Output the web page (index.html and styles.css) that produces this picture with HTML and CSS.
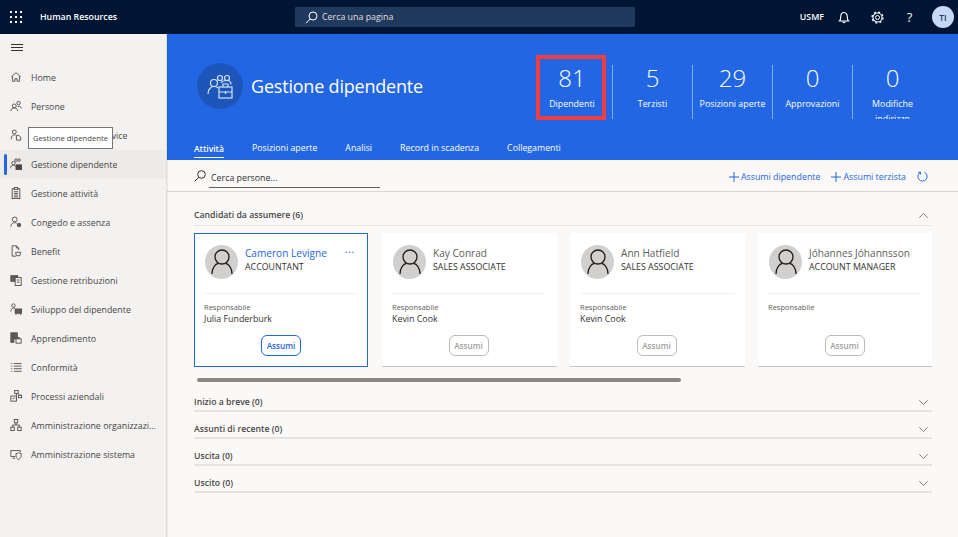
FILE: index.html
```html
<!DOCTYPE html>
<html lang="it">
<head>
<meta charset="utf-8">
<title>Gestione dipendente</title>
<link rel="stylesheet" href="styles.css">
</head>
<body>
<header class="topbar">
  <svg class="waffle" width="12" height="12" viewBox="0 0 12 12" fill="#fff"><rect x="0" y="0" width="2" height="2"/><rect x="5" y="0" width="2" height="2"/><rect x="10" y="0" width="2" height="2"/><rect x="0" y="5" width="2" height="2"/><rect x="5" y="5" width="2" height="2"/><rect x="10" y="5" width="2" height="2"/><rect x="0" y="10" width="2" height="2"/><rect x="5" y="10" width="2" height="2"/><rect x="10" y="10" width="2" height="2"/></svg>
  <span class="brand">Human Resources</span>
  <div class="globalsearch">
    <svg width="13" height="13" viewBox="0 0 13 13" fill="none" stroke="#fff" stroke-width="1"><circle cx="8" cy="5" r="4"/><path d="M5.200 8L1 12.200"/></svg>
    <span>Cerca una pagina</span>
  </div>
  <div class="topright">
    <span class="company">USMF</span>
    <svg class="ticon" width="12" height="13" viewBox="0 0 12 13" fill="none" stroke="#fff" stroke-width="1.100"><path d="M1.500 10h9c-1-1-1.200-2-1.200-4C9.300 3.500 8 1.500 6 1.500S2.700 3.500 2.700 6c0 2-.2 3-1.200 4z"/><path d="M4.700 10.500c0 1.600 2.600 1.600 2.600 0"/></svg>
    <svg class="ticon" width="13" height="13" viewBox="0 0 13 13" fill="none" stroke="#fff"><circle cx="6.500" cy="6.500" r="2"/><circle cx="6.500" cy="6.500" r="4.500" stroke-width="1.100"/><circle cx="6.500" cy="6.500" r="5.500" stroke-width="1.300" stroke-dasharray="2 2.320"/></svg>
    <span class="help">?</span>
    <span class="avatar">TI</span>
  </div>
</header>
<div class="main">
  <nav class="sidebar">
    <svg class="burger" width="12" height="8" viewBox="0 0 12 8" stroke="#323130" stroke-width="1"><path d="M0 .5h12M0 3.500h12M0 6.500h12"/></svg>
    <ul class="navlist">
      <li class="navitem"><svg class="navicon" viewBox="0 0 14 14" fill="none" stroke="#484644"><path d="M1.500 7L7 2l5.500 5M3 6v6h2.800V9h2.400v3H11V6"/></svg><span class="navlabel">Home</span></li>
      <li class="navitem"><svg class="navicon" viewBox="0 0 14 14" fill="none" stroke="#484644"><circle cx="5" cy="7" r="2.300"/><path d="M1 13c0-5 8-5 8 0"/><circle cx="10" cy="3.500" r="2"/><path d="M9 8c2-1.500 4-.5 4 2"/></svg><span class="navlabel">Persone</span></li>
      <li class="navitem"><svg class="navicon" viewBox="0 0 14 14" fill="none" stroke="#484644"><circle cx="5" cy="3.500" r="2.300"/><path d="M1.500 12c0-4 2-5.500 5-5"/><path d="M7.500 7.500h3l2 2v3.500h-5z"/></svg><span class="navlabel">Dipendente self-service</span></li>
      <li class="navitem active"><svg class="navicon" viewBox="0 0 14 14" fill="none" stroke="#484644"><circle cx="4" cy="6" r="2"/><path d="M.5 12c0-4 5-4 6-2"/><circle cx="7" cy="2.500" r="1.500"/><circle cx="10.500" cy="2.500" r="1.500"/><rect x="7" y="8" width="6.500" height="5.500" fill="#484644"/></svg><span class="navlabel">Gestione dipendente</span></li>
      <li class="navitem"><svg class="navicon" viewBox="0 0 14 14" fill="none" stroke="#484644"><rect x="2.500" y="2" width="9" height="11.500"/><rect x="5" y=".5" width="4" height="2.500" fill="#f3f2f1"/><path d="M4.500 5.500h5M4.500 7.500h5M4.500 9.500h5M4.500 11.500h5"/></svg><span class="navlabel">Gestione attività</span></li>
      <li class="navitem"><svg class="navicon" viewBox="0 0 14 14" fill="none" stroke="#484644"><circle cx="5.500" cy="4" r="2.800"/><path d="M1 12.500c0-5 5-5.500 7-4"/><circle cx="10.500" cy="10.500" r="2" fill="#605e5c"/></svg><span class="navlabel">Congedo e assenza</span></li>
      <li class="navitem"><svg class="navicon" viewBox="0 0 14 14" fill="none" stroke="#484644"><path d="M2.500 13V1h5l2.500 2.500V6"/><path d="M7.500 1v2.500H10"/><path d="M2.500 13H7"/><path d="M6.500 8.500h6l-1 4h-4z"/></svg><span class="navlabel">Benefit</span></li>
      <li class="navitem"><svg class="navicon" viewBox="0 0 14 14" fill="none" stroke="#484644"><rect x="1" y="2" width="8" height="6.500" fill="#605e5c"/><rect x="6" y="4" width="7" height="9.500" fill="#f3f2f1"/><path d="M8 7h3M8 9.500h3"/></svg><span class="navlabel">Gestione retribuzioni</span></li>
      <li class="navitem"><svg class="navicon" viewBox="0 0 14 14" fill="none" stroke="#484644"><circle cx="4" cy="3" r="2"/><path d="M1 10c0-4 3-4.500 5-3.500"/><rect x="6" y="7" width="7.500" height="5" fill="#605e5c"/><path d="M7 13v1M12.500 13v1"/></svg><span class="navlabel">Sviluppo del dipendente</span></li>
      <li class="navitem"><svg class="navicon" viewBox="0 0 14 14" fill="none" stroke="#484644"><rect x="1" y="1" width="3.500" height="11" fill="#605e5c"/><rect x="5" y="1" width="3.500" height="7" fill="#605e5c"/><rect x="7" y="8" width="6" height="5" fill="#f3f2f1"/><path d="M9 8V6.500h2V8"/></svg><span class="navlabel">Apprendimento</span></li>
      <li class="navitem"><svg class="navicon" viewBox="0 0 14 14" fill="none" stroke="#484644"><path d="M4.500 3h9M4.500 6h9M4.500 9h9M4.500 12h9"/><path d="M1 3h2M1 6h2M1 9h2M1 12h2" stroke-dasharray="1 .6"/></svg><span class="navlabel">Conformità</span></li>
      <li class="navitem"><svg class="navicon" viewBox="0 0 14 14" fill="none" stroke="#484644"><rect x="5.500" y=".5" width="4" height="3.500"/><rect x="1" y="7" width="6.500" height="6"/><rect x="10" y="6" width="3.500" height="3"/><path d="M7.500 4v3M9.500 4l2 2M3 9.500l1 1 2-2"/></svg><span class="navlabel">Processi aziendali</span></li>
      <li class="navitem"><svg class="navicon" viewBox="0 0 14 14" fill="none" stroke="#484644"><rect x="5" y=".5" width="4" height="4"/><rect x="1" y="9.500" width="4" height="4"/><rect x="9" y="9.500" width="4" height="4"/><path d="M7 4.500V7M3 9.500V7h8v2.500"/></svg><span class="navlabel">Amministrazione organizzazione</span></li>
      <li class="navitem"><svg class="navicon" viewBox="0 0 14 14" fill="none" stroke="#484644"><path d="M6 10H1V3h11v2"/><path d="M3 12h3"/><path d="M7 6.500c2 0 2.500-1 3-1s1 1 3 1v3c0 2-2 3.500-3 4-1-.5-3-2-3-4z"/></svg><span class="navlabel">Amministrazione sistema</span></li>
    </ul>
    <div class="tooltip">Gestione dipendente</div>
  </nav>
  <main class="content">
    <section class="hero">
      <div class="herotop">
        <div class="heroid">
          <div class="herobadge">
            <svg width="26" height="26" viewBox="0 0 26 26" fill="none" stroke="#d5e4fa" stroke-width="1.200"><circle cx="7" cy="10" r="3.500"/><path d="M1 21c0-6 4-7.500 6-7.500 1.500 0 3 .5 4 1.500"/><circle cx="13" cy="5" r="2.500"/><circle cx="20" cy="5" r="2.500"/><path d="M14 10c1-2 4-2.500 6-2.500s4 1 4 4"/><rect x="12" y="14" width="13" height="11" fill="#1e55b8"/><path d="M16 14v-3h5v3M12 19h13M18.500 18v3"/></svg>
          </div>
          <h1 class="herotitle">Gestione dipendente</h1>
        </div>
        <div class="kpis">
          <div class="kpi"><span class="kpinum">81</span><span class="kpilabel">Dipendenti</span></div>
          <div class="kpi"><span class="kpinum">5</span><span class="kpilabel">Terzisti</span></div>
          <div class="kpi"><span class="kpinum">29</span><span class="kpilabel">Posizioni aperte</span></div>
          <div class="kpi"><span class="kpinum">0</span><span class="kpilabel">Approvazioni</span></div>
          <div class="kpi"><span class="kpinum">0</span><span class="kpilabel">Modifiche indirizzo</span></div>
          <div class="redbox"></div>
        </div>
      </div>
      <div class="tabs">
        <span class="tab selected">Attività</span>
        <span class="tab">Posizioni aperte</span>
        <span class="tab">Analisi</span>
        <span class="tab">Record in scadenza</span>
        <span class="tab">Collegamenti</span>
      </div>
    </section>
    <div class="toolbar">
      <div class="peoplesearch">
        <svg width="12" height="12" viewBox="0 0 12 12" fill="none" stroke="#323130"><circle cx="7.500" cy="4.500" r="3.800"/><path d="M4.800 7.200L.7 11.300"/></svg>
        <span class="searchfield">Cerca persone...</span>
      </div>
      <div class="actions">
        <span class="action"><svg width="10" height="10" viewBox="0 0 10 10" stroke="#2266e3"><path d="M5 0v10M0 5h10"/></svg>Assumi dipendente</span>
        <span class="action"><svg width="10" height="10" viewBox="0 0 10 10" stroke="#2266e3"><path d="M5 0v10M0 5h10"/></svg>Assumi terzista</span>
        <svg class="refresh" width="11" height="11" viewBox="0 0 11 11" fill="none" stroke="#2266e3"><path d="M3.500 1.300a4.600 4.600 0 1 0 4 0"/><path d="M3.500 3.500V1.300H1.300"/></svg>
      </div>
    </div>
    <div class="body">
      <div class="sechead open">
        <span>Candidati da assumere (6)</span>
        <svg width="9" height="5" viewBox="0 0 9 5" fill="none" stroke="#605e5c" stroke-width=".8"><path d="M.3 4.700L4.500.5l4.200 4.200"/></svg>
      </div>
      <div class="cards">
        <article class="card focused">
          <div class="person"><span class="photo"><svg width="22" height="25" viewBox="0 0 22 25" fill="none" stroke="#201f1e" stroke-width="1.300"><circle cx="11" cy="8" r="7"/><path d="M1 25c0-7 4-10 6-10.500M21 25c0-7-4-10-6-10.500"/></svg></span>
            <div class="who"><span class="name link">Cameron Levigne</span><span class="role">ACCOUNTANT</span></div><span class="more">...</span></div>
          <div class="mgr"><span class="mgrlabel">Responsabile</span><span class="mgrname">Julia Funderburk</span></div>
          <div class="cardfoot"><span class="hire on">Assumi</span></div>
        </article>
        <article class="card">
          <div class="person"><span class="photo"><svg width="22" height="25" viewBox="0 0 22 25" fill="none" stroke="#201f1e" stroke-width="1.300"><circle cx="11" cy="8" r="7"/><path d="M1 25c0-7 4-10 6-10.500M21 25c0-7-4-10-6-10.500"/></svg></span>
            <div class="who"><span class="name">Kay Conrad</span><span class="role">SALES ASSOCIATE</span></div></div>
          <div class="mgr"><span class="mgrlabel">Responsabile</span><span class="mgrname">Kevin Cook</span></div>
          <div class="cardfoot"><span class="hire">Assumi</span></div>
        </article>
        <article class="card">
          <div class="person"><span class="photo"><svg width="22" height="25" viewBox="0 0 22 25" fill="none" stroke="#201f1e" stroke-width="1.300"><circle cx="11" cy="8" r="7"/><path d="M1 25c0-7 4-10 6-10.500M21 25c0-7-4-10-6-10.500"/></svg></span>
            <div class="who"><span class="name">Ann Hatfield</span><span class="role">SALES ASSOCIATE</span></div></div>
          <div class="mgr"><span class="mgrlabel">Responsabile</span><span class="mgrname">Kevin Cook</span></div>
          <div class="cardfoot"><span class="hire">Assumi</span></div>
        </article>
        <article class="card">
          <div class="person"><span class="photo"><svg width="22" height="25" viewBox="0 0 22 25" fill="none" stroke="#201f1e" stroke-width="1.300"><circle cx="11" cy="8" r="7"/><path d="M1 25c0-7 4-10 6-10.500M21 25c0-7-4-10-6-10.500"/></svg></span>
            <div class="who"><span class="name">Jóhannes Jóhannsson</span><span class="role">ACCOUNT MANAGER</span></div></div>
          <div class="mgr"><span class="mgrlabel">Responsabile</span><span class="mgrname">&nbsp;</span></div>
          <div class="cardfoot"><span class="hire">Assumi</span></div>
        </article>
      </div>
      <div class="scrolltrack"><div class="scrollthumb"></div></div>
      <div class="sechead"><span>Inizio a breve (0)</span><svg width="9" height="5" viewBox="0 0 9 5" fill="none" stroke="#605e5c" stroke-width=".8"><path d="M.3.300L4.500 4.500 8.700.3"/></svg></div>
      <div class="sechead"><span>Assunti di recente (0)</span><svg width="9" height="5" viewBox="0 0 9 5" fill="none" stroke="#605e5c" stroke-width=".8"><path d="M.3.300L4.500 4.500 8.700.3"/></svg></div>
      <div class="sechead"><span>Uscita (0)</span><svg width="9" height="5" viewBox="0 0 9 5" fill="none" stroke="#605e5c" stroke-width=".8"><path d="M.3.300L4.500 4.500 8.700.3"/></svg></div>
      <div class="sechead"><span>Uscito (0)</span><svg width="9" height="5" viewBox="0 0 9 5" fill="none" stroke="#605e5c" stroke-width=".8"><path d="M.3.300L4.500 4.500 8.700.3"/></svg></div>
    </div>
  </main>
</div>
</body>
</html>
```
FILE: styles.css
```css
* { box-sizing: border-box; }
html, body { margin: 0; height: 100%; }
body {
  width: 958px; height: 537px; overflow: hidden;
  font-family: "Open Sans", "Liberation Sans", sans-serif;
  font-size: 8.85px; color: #323130; background: #faf9f8;
  display: flex; flex-direction: column;
}
.topbar {
  height: 34px; flex: none; background: #001433; color: #fff;
  display: flex; align-items: center; position: relative;
}
.waffle { margin-left: 10px; }
.brand { margin-left: 18px; font-size: 8.8px; font-weight: 600; width: 255px; }
.globalsearch {
  width: 340px; height: 20px; background: #203a5e; color: #e1dfdd;
  display: flex; align-items: center; gap: 4px; padding-left: 10px;
  border-radius: 1px;
}
.topright { margin-left: auto; display: flex; align-items: center; height: 100%; }
.company { font-size: 8.8px; font-weight: 600; margin-right: 14px; }
.ticon { margin-right: 21px; }
.help { font-size: 13px; width: 9px; margin-right: 18px; color: #f3f2f1; text-align: center; }
.avatar {
  width: 22px; height: 22px; border-radius: 50%; background: #c7d8f5; color: #22385c;
  display: flex; align-items: center; justify-content: center;
  font-size: 8.5px; font-weight: 600; margin-right: 4px;
}
.main { flex: 1; display: flex; min-height: 0; }
.sidebar {
  width: 167px; flex: none; background: #f3f2f1; border-right: 1px solid #e1dfdd;
  position: relative; padding-top: 10px; box-shadow: 1px 0 1px rgba(0,0,0,.06);
}
.burger { display: block; margin: 0 0 0 11px; }
.navlist { list-style: none; margin: 11px 0 0; padding: 0; }
.navitem {
  height: 29px; display: flex; align-items: center; padding-left: 10px; gap: 9px;
  white-space: nowrap; position: relative; color: #484644;
}
.navlabel { display: block; max-width: 130px; overflow: hidden; text-overflow: ellipsis; }
.navicon { flex: none; width: 12px; height: 12px; margin-top: -2px; }
.active { background: #edebe9; }
.active::before {
  content: ""; position: absolute; left: 4px; top: 4px; bottom: 4px; width: 3px;
  background: #2266e3; border-radius: 2px;
}
.tooltip {
  position: absolute; left: 28px; top: 93px; width: 85px; height: 22px;
  background: #fff; border: 1px solid #767472; font-size: 7.7px; color: #484644;
  display: flex; align-items: center; justify-content: center; white-space: nowrap;
}
.content { flex: 1; min-width: 0; display: flex; flex-direction: column; }
.hero { height: 126px; flex: none; background: #2266e3; color: #fff; display: flex; flex-direction: column; }
.herotop { flex: none; height: 100px; display: flex; justify-content: space-between; padding-left: 30px; }
.heroid { display: flex; align-items: center; gap: 8px; padding-top: 11px; height: 92px; }
.herobadge {
  width: 46px; height: 46px; border-radius: 50%; background: #1e55b8;
  display: flex; align-items: center; justify-content: center;
}
.herotitle { margin: 0; font-size: 18px; letter-spacing: -.2px; font-weight: 400; white-space: nowrap; }
.kpis { display: flex; margin-top: 31px; margin-right: 26px; height: 54px; position: relative; }
.kpi {
  width: 80px; height: 54px; overflow: hidden; text-align: center;
  border-left: 1px solid rgba(255,255,255,.45);
  display: flex; flex-direction: column; align-items: center; padding: 0 2px;
}
.kpi:first-child { border-left: 0; }
.kpinum { font-size: 24px; line-height: 26px; margin-bottom: 6px; flex: none; font-weight: 300; }
.kpilabel { font-size: 8.85px; line-height: 15px; flex: none; }
.redbox {
  position: absolute; left: 4px; top: -10px; width: 70px; height: 65px;
  border: 4px solid #ef3e42;
}
.tabs { display: flex; padding-left: 27px; gap: 28px; height: 26px; padding-top: 5px; }
.tab { height: 19px; line-height: 19px; font-size: 8.8px; }
.selected { font-weight: 600; font-size: 8.5px; border-bottom: 1px solid #fff; }
.toolbar {
  height: 32px; flex: none; border-bottom: 1px solid #d9d7d5;
  display: flex; justify-content: space-between; align-items: center;
  padding: 0 30px 0 27px; background: #faf9f8;
}
.peoplesearch { display: flex; align-items: center; gap: 3px; }
.searchfield {
  width: 171px; height: 21px; line-height: 22px; border-bottom: 1px solid #605e5c; color: #323130;
  padding-left: 2px; margin-top: 3px;
}
.actions { display: flex; align-items: center; gap: 11px; color: #2266e3; margin-top: 2px; }
.action { display: flex; align-items: center; gap: 2px; }
.body { flex: 1; padding: 13px 26px 0 27px; min-height: 0; overflow: hidden; }
.sechead {
  height: 27px; display: flex; justify-content: space-between; align-items: center;
  font-weight: 600; font-size: 8.7px; border-bottom: 2px solid #e6e4e2; padding: 9px 4px 0 0;
  color: #484644;
}
.sechead.open { height: 21px; border-bottom-width: 1px; padding-top: 0; }
.cards { display: flex; gap: 13px; margin-top: 7px; overflow: hidden; }
.card {
  width: 175px; height: 134px; flex: none; background: #fff; border-bottom: 1px solid #c8c6c4;
  padding: 12px 11px 0 10px; display: flex; flex-direction: column;
}
.focused { border: 1px solid #2266e3; padding: 11px 10px 0 9px; width: 174px; margin-right: 1px; }
.person { display: flex; gap: 7px; height: 49px; padding-left: 1px; border-bottom: 1px solid #f3f2f1; position: relative; }
.photo {
  width: 33px; height: 34px; border-radius: 50%; background: #d2d0ce; flex: none;
  display: flex; align-items: flex-end; justify-content: center; padding-bottom: 5px;
}
.who { display: flex; flex-direction: column; padding-top: 1px; }
.name { font-size: 10.1px; line-height: 14px; color: #605e5c; white-space: nowrap; }
.link { color: #2266e3; }
.role { font-size: 8.85px; line-height: 14px; color: #323130; white-space: nowrap; }
.more { position: absolute; right: 2px; top: -4px; color: #2266e3; font-size: 11px; letter-spacing: .6px; }
.mgr { display: flex; flex-direction: column; padding-top: 8px; }
.mgrlabel { font-size: 7.5px; line-height: 11px; color: #605e5c; }
.mgrname { font-size: 8.85px; line-height: 13px; }
.cardfoot { display: flex; justify-content: center; margin-top: 9px; padding-right: 1px; }
.focused .cardfoot { padding: 0 0 0 1px; }
.hire {
  width: 40px; height: 21px; border: 1px solid #bdbbb9; border-radius: 6px; background: #fff;
  color: #a19f9d; font-size: 8.2px; font-weight: 600;
  display: flex; align-items: center; justify-content: center;
}
.hire.on { color: #2266e3; border-color: #2266e3; }
.scrolltrack { height: 4px; margin: 11px 0 3px 3px; }
.scrollthumb { width: 484px; height: 4px; border-radius: 2px; background: #8a8886; }
```
